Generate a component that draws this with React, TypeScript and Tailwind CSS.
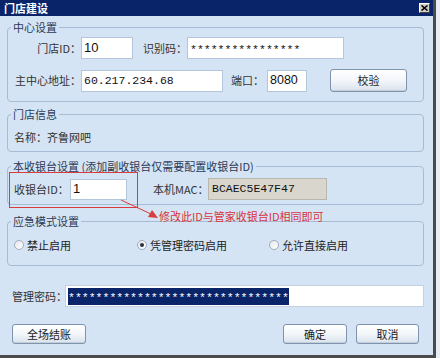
import type { ReactNode } from 'react';

const cjk = "font-['Noto_Sans_CJK_SC',sans-serif]";
const mono = "font-['Liberation_Mono',monospace]";
const sans = "font-['Liberation_Sans',sans-serif]";

function Group({ title, className, children }: { title: string; className?: string; children: ReactNode }) {
  return (
    <fieldset className={`border border-[#a6bcd5] rounded-[4px] min-w-0 ${className ?? ''}`}>
      <legend className="ml-[3px] px-[2px] whitespace-nowrap text-[11px] leading-[14px] text-[#2b3a57]">{title}</legend>
      {children}
    </fieldset>
  );
}

function Field({ className, children }: { className?: string; children?: ReactNode }) {
  return (
    <div className={`flex shrink-0 items-center border border-[#b4c6da] bg-white pl-[2px] text-[#111] ${className ?? ''}`}>
      {children}
    </div>
  );
}

function Label({ className, children }: { className?: string; children: ReactNode }) {
  return (
    <span className={`shrink-0 whitespace-nowrap text-[11px] text-[#333] ${className ?? ''}`}>{children}</span>
  );
}

function Button({ label, className }: { label: string; className?: string }) {
  return (
    <button className={`flex items-center justify-center rounded-[3px] border border-[#7f93ad] bg-gradient-to-b from-[#ffffff] via-[#f3f6fa] to-[#d9e2ec] text-[11px] text-[#1b1b1b] shadow-[inset_0_-1px_0_#c4cfdc] ${className ?? ''}`}>
      {label}
    </button>
  );
}

function Radio({ label, checked }: { label: string; checked?: boolean }) {
  return (
    <span className="flex items-center gap-[3px]">
      <span className="flex h-[10px] w-[10px] items-center justify-center rounded-full border border-[#a2adbb] bg-gradient-to-br from-[#e4e7ec] to-[#ffffff]">
        {checked && <span className="h-[4px] w-[4px] rounded-full bg-[#2a3242]" />}
      </span>
      <span className="whitespace-nowrap text-[11px] leading-[14px] text-[#222]">{label}</span>
    </span>
  );
}

export default function App() {
  return (
    <div className={`relative w-[440px] h-[358px] overflow-hidden bg-[#e9eef4] ${cjk}`}>
      <div className="flex h-[358px] w-[436px] flex-col border-r-[3px] border-b-[3px] border-[#4b4b4b]">
        {/* title bar */}
        <div className="flex h-[16px] items-center justify-between bg-[#0a246a] pl-[4px] pr-[3px]">
          <span className="text-[11px] font-bold leading-[14px] text-white">门店建设</span>
          <span className="flex h-[10px] w-[11px] items-center justify-center border border-t-white border-l-white border-r-[#404040] border-b-[#404040] bg-[#d4d0c8]">
            <svg width="7" height="6" viewBox="0 0 7 6">
              <path d="M0.5 0.5 L6.5 5.5 M6.5 0.5 L0.5 5.5" stroke="#000" strokeWidth="1.6" />
            </svg>
          </span>
        </div>

        <div className="flex flex-1 flex-col bg-[#d5e4f4] pl-[7px] pr-[9px] pt-[4px]">
          <Group title="中心设置" className="pb-[9px]">
            <div className="mt-[3px] flex h-[22px] items-center">
              <Label className="w-[73px] text-right">门店ID：</Label>
              <Field className={`h-[22px] w-[52px] text-[13px] ${sans}`}>10</Field>
              <Label className="ml-[10px] w-[44px]">识别码：</Label>
              <Field className={`h-[22px] w-[157px] pt-[4px] text-[11.5px] ${mono}`}>****************</Field>
            </div>
            <div className="mt-[10px] flex h-[23px] items-center">
              <Label className="w-[73px] text-right">主中心地址：</Label>
              <Field className={`h-[22px] w-[142px] text-[11.5px] ${mono}`}>60.217.234.68</Field>
              <Label className="ml-[8px] w-[36px]">端口：</Label>
              <Field className={`h-[22px] w-[40px] text-[12.5px] ${sans}`}>8080</Field>
              <Button label="校验" className="ml-[23px] h-[23px] w-[77px]" />
            </div>
          </Group>

          <Group title="门店信息" className="mt-[5px] pb-[7px]">
            <div className="mt-[9px] pl-[6px] text-[11px] leading-[14px] text-[#333]">名称：齐鲁网吧</div>
          </Group>

          <Group title="本收银台设置 (添加副收银台仅需要配置收银台ID)" className="mt-[7px] pb-[4px]">
            <div className="mt-[5px] flex h-[22px] items-center pl-[6px]">
              <Label className="w-[56px]">收银台ID：</Label>
              <Field className={`h-[21px] w-[57px] text-[13px] ${sans}`}>1</Field>
              <Label className="ml-[26px] w-[55px]">本机MAC：</Label>
              <div className={`flex h-[22px] w-[119px] shrink-0 items-center border border-[#b9b6ae] bg-[#d9d6cd] pl-[3px] text-[11.5px] text-[#111] ${mono}`}>
                BCAEC5E47F47
              </div>
            </div>
          </Group>

          <Group title="应急模式设置" className="mt-[9px] pb-[13px]">
            <div className="mt-[10px] flex h-[14px] items-center pl-[6px]">
              <div className="w-[123px] shrink-0"><Radio label="禁止启用" /></div>
              <div className="w-[132px] shrink-0"><Radio label="凭管理密码启用" checked /></div>
              <Radio label="允许直接启用" />
            </div>
          </Group>

          <div className="mt-[19px] flex h-[22px] items-center pl-[5px]">
            <Label className="w-[53px]">管理密码：</Label>
            <div className="flex h-[22px] min-w-0 flex-1 items-center border border-[#c3d1e0] bg-white pl-[2px]">
              <span className={`h-[17px] bg-[#0a246a] pt-[3px] text-[11.5px] leading-[14px] text-white ${mono}`}>
                ********************************
              </span>
            </div>
          </div>

          <div className="mt-[17px] flex h-[20px] items-center justify-between pl-[5px]">
            <Button label="全场结账" className="h-[20px] w-[74px]" />
            <div className="mr-[5px] flex gap-[9px]">
              <Button label="确定" className="h-[20px] w-[64px]" />
              <Button label="取消" className="h-[20px] w-[63px]" />
            </div>
          </div>
        </div>
      </div>

      {/* annotation */}
      <div className="absolute left-[9px] top-[172px] h-[36px] w-[129px] border border-[#d83c3c]" />
      <svg className="absolute left-[115px] top-[195px]" width="50" height="30" viewBox="0 0 50 30">
        <path d="M6 5 L36 19" stroke="#d83c3c" strokeWidth="1" />
        <path d="M43 23 L33 22 L37 15 Z" fill="#d83c3c" />
      </svg>
      <div className="absolute left-[159px] top-[209px] whitespace-nowrap text-[11px] leading-[14px] text-[#d7343c]">
        修改此ID与管家收银台ID相同即可
      </div>
    </div>
  );
}
